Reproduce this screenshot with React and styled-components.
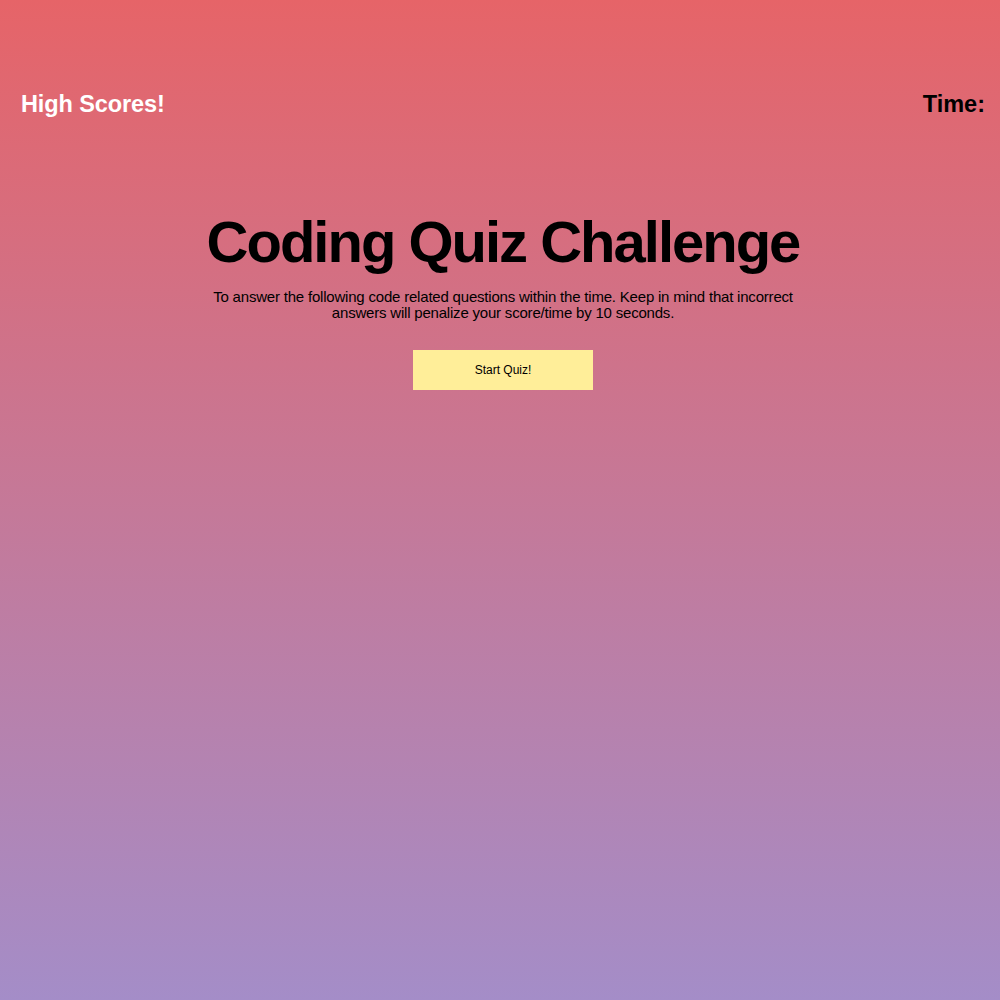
import React from "react";
import styled, { createGlobalStyle } from "styled-components";

const Global = createGlobalStyle`
  html, body { margin: 0; padding: 0; }
  body {
    font-family: "Liberation Sans", Arial, sans-serif;
    min-height: 1000px;
    background: linear-gradient(180deg, #e66468 0%, #a48dc8 100%);
    background-repeat: no-repeat;
  }
`;

const Page = styled.div`
  min-height: 1000px;
  display: flex;
  flex-direction: column;
`;

const Header = styled.header`
  display: flex;
  justify-content: space-between;
  align-items: center;
  padding: 91px 15px 0 21px;
`;

const HighScores = styled.a`
  color: #fff;
  font-weight: bold;
  font-size: 23.5px;
  letter-spacing: -0.1px;
  text-decoration: none;
`;

const Timer = styled.div`
  color: #000;
  font-weight: bold;
  font-size: 23.5px;
`;

const Main = styled.main`
  display: flex;
  flex-direction: column;
  align-items: center;
  text-align: center;
  padding: 91px 0 0 6px;
`;

const Title = styled.h1`
  margin: 0;
  font-size: 58px;
  font-weight: bold;
  letter-spacing: -2px;
  line-height: 66px;
`;

const Intro = styled.p`
  margin: 14px 0 0;
  width: 600px;
  font-size: 15px;
  letter-spacing: -0.2px;
  line-height: 15.5px;
`;

const StartButton = styled.button`
  margin-top: 30px;
  width: 180px;
  height: 40px;
  border: none;
  background: #ffee99;
  font-family: "Liberation Sans", Arial, sans-serif;
  font-size: 12px;
  color: #000;
  cursor: pointer;
`;

export default function App() {
  return (
    <>
      <Global />
      <Page>
        <Header>
          <HighScores href="#">High Scores!</HighScores>
          <Timer>Time:</Timer>
        </Header>
        <Main>
          <Title>Coding Quiz Challenge</Title>
          <Intro>
            To answer the following code related questions within the time. Keep in mind that incorrect
            answers will penalize your score/time by 10 seconds.
          </Intro>
          <StartButton>Start Quiz!</StartButton>
        </Main>
      </Page>
    </>
  );
}
